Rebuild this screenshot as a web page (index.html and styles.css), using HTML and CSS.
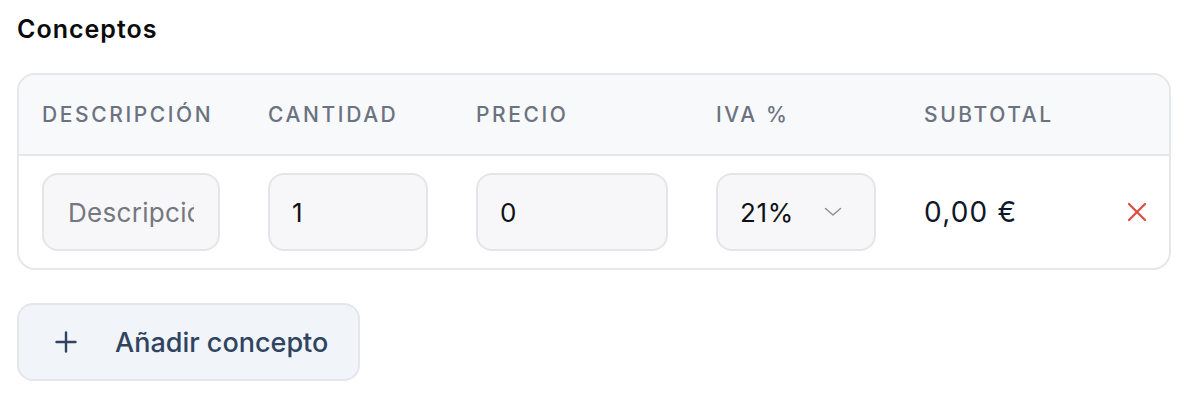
FILE: index.html
```html
<!DOCTYPE html>
<html lang="es">
<head>
<meta charset="utf-8">
<link rel="stylesheet" href="styles.css">
</head>
<body>
<section class="conceptos">
  <h2 class="title">Conceptos</h2>
  <div class="card">
    <div class="row head">
      <div class="th">Descripción</div>
      <div class="th">Cantidad</div>
      <div class="th">Precio</div>
      <div class="th">IVA %</div>
      <div class="th">Subtotal</div>
      <div class="th"></div>
    </div>
    <div class="row body">
      <input class="field desc" type="text" placeholder="Descripción">
      <input class="field" type="text" value="1">
      <input class="field" type="text" value="0">
      <div class="field select"><span>21%</span>
        <svg class="chev" width="18" height="10" viewBox="0 0 18 10"><path d="M1.5 1.5 L9 8 L16.5 1.5" fill="none" stroke="#8a8f98" stroke-width="1.5" stroke-linecap="round" stroke-linejoin="round"/></svg>
      </div>
      <div class="subtotal">0,00 €</div>
      <div class="remove">
        <svg width="20" height="20" viewBox="0 0 20 20"><path d="M2 2 L18 18 M18 2 L2 18" stroke="#e04a3f" stroke-width="2.2" stroke-linecap="round"/></svg>
      </div>
    </div>
  </div>
  <button class="add" type="button">
    <svg width="22" height="22" viewBox="0 0 22 22"><path d="M11 1.5 V20.5 M1.5 11 H20.5" stroke="#2e4461" stroke-width="2.4" stroke-linecap="round"/></svg>
    <span>Añadir concepto</span>
  </button>
</section>
</body>
</html>
```
FILE: styles.css
```css
* { box-sizing: border-box; }
html, body { margin: 0; padding: 0; background: #ffffff; }
body { font-family: Inter, "Noto Sans", sans-serif; color: #111827; }

.conceptos { padding: 9px 29px 0 17px; }

.title {
  margin: 0;
  font-size: 25px;
  font-weight: 600;
  letter-spacing: 1px;
  line-height: 40px;
  color: #0b0b0c;
}

.card {
  margin-top: 24px;
  border: 2px solid #e6e7ea;
  border-radius: 18px;
  overflow: hidden;
}

.row {
  display: grid;
  grid-template-columns: 178px 160px 192px 160px 1fr 24px;
  column-gap: 48px;
  padding: 0 22px 0 23px;
  align-items: center;
}

.head {
  background: #f8f9fb;
  height: 81px;
  border-bottom: 2px solid #e6e7ea;
}

.th {
  font-size: 21px;
  font-weight: 500;
  letter-spacing: 2.6px;
  text-transform: uppercase;
  color: #6b7280;
  white-space: nowrap;
}

.body { padding-top: 17px; padding-bottom: 17px; }

.field {
  width: 100%;
  height: 78px;
  margin: 0;
  border: 2px solid #e4e5e8;
  border-radius: 16px;
  background: #f7f7f9;
  display: flex;
  align-items: center;
  padding: 0 22px;
  font-family: Inter, "Noto Sans", sans-serif;
  font-size: 26px;
  letter-spacing: 0.3px;
  color: #0f1115;
  outline: none;
}
.desc { padding: 0 24px; }
.desc::placeholder { color: #74777e; opacity: 1; }
.select { justify-content: space-between; padding-right: 32px; letter-spacing: 0.6px; }
.chev { display: block; }

.subtotal { font-size: 28px; letter-spacing: 1.2px; color: #0f172a; }

.remove { display: flex; justify-content: flex-end; }
.remove svg { display: block; }

.add {
  margin-top: 33px;
  height: 78px;
  width: 343px;
  display: flex;
  align-items: center;
  gap: 38px;
  padding: 0 0 0 36px;
  background: #f1f4f9;
  border: 2px solid #e4e6ea;
  border-radius: 16px;
  font-family: Inter, "Noto Sans", sans-serif;
  font-size: 27px;
  font-weight: 500;
  color: #2e4461;
}
.add svg { display: block; }
```
